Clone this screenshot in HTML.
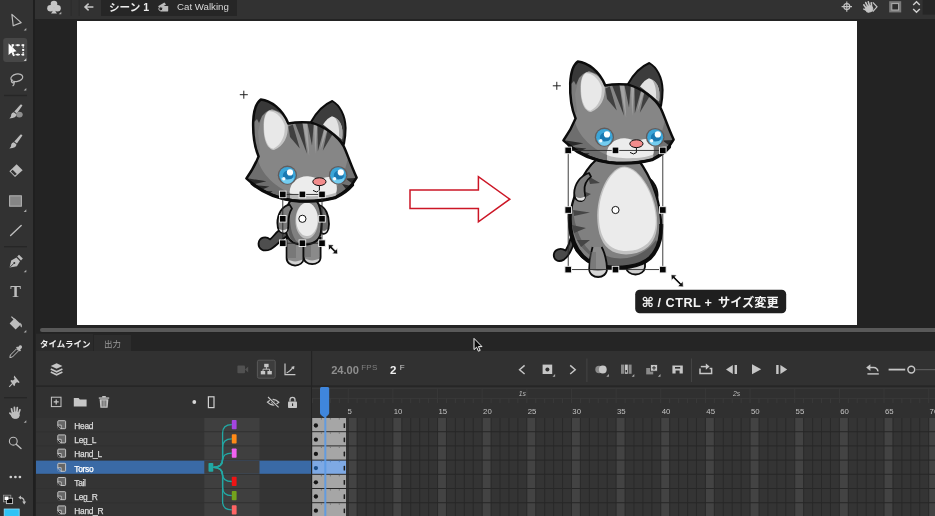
<!DOCTYPE html><html lang="ja"><head><meta charset="utf-8"><title>Cat Walking</title><style>
*{margin:0;padding:0;box-sizing:border-box}
html,body{width:935px;height:516px;overflow:hidden;background:#232323}
body{position:relative;font-family:"Liberation Sans","Noto Sans CJK JP",sans-serif;color:#ddd}
.abs{position:absolute}
#toolbar{left:0;top:0;width:33px;height:516px;background:#323232}
#topbar{left:35px;top:0;width:900px;height:19px;background:#323232}
#crumb{left:101px;top:0;width:136px;height:15.5px;background:#262626}
#stage{left:77px;top:21px;width:780px;height:304px;background:#fff}
#hband{left:40px;top:328px;width:895px;height:3.8px;background:#595959;border-radius:2px 0 0 2px}
#tabs{left:36px;top:333px;width:899px;height:18px;background:#252525}
#tab1{left:36px;top:334px;width:57px;height:17px;background:#2b2b2b}
#tab2{left:94.4px;top:335px;width:36.6px;height:16px;background:#2d2d2d}
#panel{left:36px;top:351px;width:899px;height:165px;background:#313131}
#root{position:absolute;left:0;top:0;width:935px;height:516px;will-change:transform}
.t{position:absolute;white-space:nowrap;line-height:1}
svg{position:absolute;left:0;top:0;overflow:visible}
</style></head><body>
<div id="root">
<div class="abs" id="toolbar"></div>
<div class="abs" id="topbar"></div>
<div class="abs" id="crumb"></div>
<div class="abs" id="stage"></div>
<div class="abs" id="hband"></div>
<div class="abs" id="tabs"></div>
<div class="abs" id="tab1"></div>
<div class="abs" id="tab2"></div>
<div class="abs" id="panel"></div>
<div class="t" style="left:109px;top:1.8px;font-size:10.6px;color:#ececec;font-weight:bold;">シーン 1</div>
<div class="t" style="left:177px;top:2.2px;font-size:9.7px;color:#d8d8d8;font-weight:normal;">Cat Walking</div>
<div class="t" style="left:40px;top:339.5px;font-size:8.5px;color:#f0f0f0;font-weight:bold;">タイムライン</div>
<div class="t" style="left:104px;top:340px;font-size:8.5px;color:#9a9a9a;font-weight:normal;">出力</div>
<div class="t" style="left:331.2px;top:365px;font-size:11.1px;color:#8e8e8e;font-weight:bold;">24.00</div>
<div class="t" style="left:361.2px;top:363.8px;font-size:8px;color:#808080;font-weight:normal;letter-spacing:0.3px">FPS</div>
<div class="t" style="left:390px;top:364.6px;font-size:11.5px;color:#f0f0f0;font-weight:bold;">2</div>
<div class="t" style="left:399.8px;top:363.8px;font-size:8px;color:#d0d0d0;font-weight:normal;">F</div>
<svg width="935" height="516" viewBox="0 0 935 516">
<rect x="36" y="385.5" width="899" height="1.2" fill="#232323"/>
<rect x="311" y="351" width="1.2" height="165" fill="#232323"/>
<rect x="312" y="387" width="623" height="30.5" fill="#303030"/>
<rect x="312" y="388" width="623" height="0.8" fill="#3a3a3a"/>
<rect x="312" y="398" width="623" height="0.8" fill="#3a3a3a"/>
<rect x="312" y="418.0" width="623" height="98.0" fill="#343434"/>
<rect x="348.22" y="418.0" width="8.93" height="98.0" fill="#434343"/>
<rect x="392.87" y="418.0" width="8.93" height="98.0" fill="#434343"/>
<rect x="437.52" y="418.0" width="8.93" height="98.0" fill="#434343"/>
<rect x="482.17" y="418.0" width="8.93" height="98.0" fill="#434343"/>
<rect x="526.82" y="418.0" width="8.93" height="98.0" fill="#434343"/>
<rect x="571.47" y="418.0" width="8.93" height="98.0" fill="#434343"/>
<rect x="616.12" y="418.0" width="8.93" height="98.0" fill="#434343"/>
<rect x="660.77" y="418.0" width="8.93" height="98.0" fill="#434343"/>
<rect x="705.42" y="418.0" width="8.93" height="98.0" fill="#434343"/>
<rect x="750.07" y="418.0" width="8.93" height="98.0" fill="#434343"/>
<rect x="794.72" y="418.0" width="8.93" height="98.0" fill="#434343"/>
<rect x="839.37" y="418.0" width="8.93" height="98.0" fill="#434343"/>
<rect x="884.02" y="418.0" width="8.93" height="98.0" fill="#434343"/>
<rect x="928.67" y="418.0" width="8.93" height="98.0" fill="#434343"/>
<path d="M312.50 418.0V516M321.43 418.0V516M330.36 418.0V516M339.29 418.0V516M348.22 418.0V516M357.15 418.0V516M366.08 418.0V516M375.01 418.0V516M383.94 418.0V516M392.87 418.0V516M401.80 418.0V516M410.73 418.0V516M419.66 418.0V516M428.59 418.0V516M437.52 418.0V516M446.45 418.0V516M455.38 418.0V516M464.31 418.0V516M473.24 418.0V516M482.17 418.0V516M491.10 418.0V516M500.03 418.0V516M508.96 418.0V516M517.89 418.0V516M526.82 418.0V516M535.75 418.0V516M544.68 418.0V516M553.61 418.0V516M562.54 418.0V516M571.47 418.0V516M580.40 418.0V516M589.33 418.0V516M598.26 418.0V516M607.19 418.0V516M616.12 418.0V516M625.05 418.0V516M633.98 418.0V516M642.91 418.0V516M651.84 418.0V516M660.77 418.0V516M669.70 418.0V516M678.63 418.0V516M687.56 418.0V516M696.49 418.0V516M705.42 418.0V516M714.35 418.0V516M723.28 418.0V516M732.21 418.0V516M741.14 418.0V516M750.07 418.0V516M759.00 418.0V516M767.93 418.0V516M776.86 418.0V516M785.79 418.0V516M794.72 418.0V516M803.65 418.0V516M812.58 418.0V516M821.51 418.0V516M830.44 418.0V516M839.37 418.0V516M848.30 418.0V516M857.23 418.0V516M866.16 418.0V516M875.09 418.0V516M884.02 418.0V516M892.95 418.0V516M901.88 418.0V516M910.81 418.0V516M919.74 418.0V516M928.67 418.0V516M937.60 418.0V516" stroke="#282828" stroke-width="0.9" fill="none"/>
<path d="M312.50 398.5V403M321.43 398.5V403M330.36 398.5V403M339.29 398.5V403M348.22 398.5V403M357.15 398.5V403M366.08 398.5V403M375.01 398.5V403M383.94 398.5V403M392.87 398.5V403M401.80 398.5V403M410.73 398.5V403M419.66 398.5V403M428.59 398.5V403M437.52 398.5V403M446.45 398.5V403M455.38 398.5V403M464.31 398.5V403M473.24 398.5V403M482.17 398.5V403M491.10 398.5V403M500.03 398.5V403M508.96 398.5V403M517.89 398.5V403M526.82 398.5V403M535.75 398.5V403M544.68 398.5V403M553.61 398.5V403M562.54 398.5V403M571.47 398.5V403M580.40 398.5V403M589.33 398.5V403M598.26 398.5V403M607.19 398.5V403M616.12 398.5V403M625.05 398.5V403M633.98 398.5V403M642.91 398.5V403M651.84 398.5V403M660.77 398.5V403M669.70 398.5V403M678.63 398.5V403M687.56 398.5V403M696.49 398.5V403M705.42 398.5V403M714.35 398.5V403M723.28 398.5V403M732.21 398.5V403M741.14 398.5V403M750.07 398.5V403M759.00 398.5V403M767.93 398.5V403M776.86 398.5V403M785.79 398.5V403M794.72 398.5V403M803.65 398.5V403M812.58 398.5V403M821.51 398.5V403M830.44 398.5V403M839.37 398.5V403M848.30 398.5V403M857.23 398.5V403M866.16 398.5V403M875.09 398.5V403M884.02 398.5V403M892.95 398.5V403M901.88 398.5V403M910.81 398.5V403M919.74 398.5V403M928.67 398.5V403M937.60 398.5V403" stroke="#3c3c3c" stroke-width="0.8" fill="none"/>
<path d="M348.22 388.5V398.5M392.87 388.5V398.5M437.52 388.5V398.5M482.17 388.5V398.5M526.82 388.5V398.5M571.47 388.5V398.5M616.12 388.5V398.5M660.77 388.5V398.5M705.42 388.5V398.5M750.07 388.5V398.5M794.72 388.5V398.5M839.37 388.5V398.5M884.02 388.5V398.5M928.67 388.5V398.5" stroke="#3a3a3a" stroke-width="0.8" fill="none"/>
<rect x="36" y="418.00" width="275" height="13.20" fill="#343434"/>
<rect x="204.3" y="418.00" width="55.2" height="13.20" fill="#3f3f3f"/>
<rect x="312" y="431.20" width="623" height="1" fill="#272727"/>
<rect x="312.2" y="418.00" width="33.8" height="13.20" fill="#a6a6a6"/>
<path d="M321.4 418.00v1.6M330.4 418.00v1.6M339.3 418.00v1.6" stroke="#6e6e6e" stroke-width="0.8"/>
<circle cx="315.9" cy="425.50" r="2.15" fill="#151515"/>
<rect x="343.6" y="423.20" width="1.5" height="4.8" rx="0.6" fill="#1c1c1c"/>
<rect x="57.8" y="420.70" width="7.8" height="8" rx="0.8" fill="#666" stroke="#cfcfcf" stroke-width="0.9"/>
<path d="M57.4 425.30H61.0V429.10H57.4Z" fill="#343434"/>
<path d="M57.599999999999994 425.10H61.199999999999996V428.90" fill="none" stroke="#cfcfcf" stroke-width="0.8"/>
<path d="M57.599999999999994 425.30L61.0 428.90" stroke="#cfcfcf" stroke-width="0.8"/>
<text x="74.3" y="429.00" font-size="8.4" letter-spacing="-0.3" stroke="#dcdcdc" stroke-width="0.25" fill="#dcdcdc" font-family="Liberation Sans, sans-serif">Head</text>
<rect x="36" y="432.20" width="275" height="13.20" fill="#343434"/>
<rect x="204.3" y="432.20" width="55.2" height="13.20" fill="#3f3f3f"/>
<rect x="312" y="445.40" width="623" height="1" fill="#272727"/>
<rect x="312.2" y="432.20" width="33.8" height="13.20" fill="#a6a6a6"/>
<path d="M321.4 432.20v1.6M330.4 432.20v1.6M339.3 432.20v1.6" stroke="#6e6e6e" stroke-width="0.8"/>
<circle cx="315.9" cy="439.70" r="2.15" fill="#151515"/>
<rect x="343.6" y="437.40" width="1.5" height="4.8" rx="0.6" fill="#1c1c1c"/>
<rect x="57.8" y="434.90" width="7.8" height="8" rx="0.8" fill="#666" stroke="#cfcfcf" stroke-width="0.9"/>
<path d="M57.4 439.50H61.0V443.30H57.4Z" fill="#343434"/>
<path d="M57.599999999999994 439.30H61.199999999999996V443.10" fill="none" stroke="#cfcfcf" stroke-width="0.8"/>
<path d="M57.599999999999994 439.50L61.0 443.10" stroke="#cfcfcf" stroke-width="0.8"/>
<text x="74.3" y="443.20" font-size="8.4" letter-spacing="-0.3" stroke="#dcdcdc" stroke-width="0.25" fill="#dcdcdc" font-family="Liberation Sans, sans-serif">Leg_L</text>
<rect x="36" y="446.40" width="275" height="13.20" fill="#343434"/>
<rect x="204.3" y="446.40" width="55.2" height="13.20" fill="#3f3f3f"/>
<rect x="312" y="459.60" width="623" height="1" fill="#272727"/>
<rect x="312.2" y="446.40" width="33.8" height="13.20" fill="#a6a6a6"/>
<path d="M321.4 446.40v1.6M330.4 446.40v1.6M339.3 446.40v1.6" stroke="#6e6e6e" stroke-width="0.8"/>
<circle cx="315.9" cy="453.90" r="2.15" fill="#151515"/>
<rect x="343.6" y="451.60" width="1.5" height="4.8" rx="0.6" fill="#1c1c1c"/>
<rect x="57.8" y="449.10" width="7.8" height="8" rx="0.8" fill="#666" stroke="#cfcfcf" stroke-width="0.9"/>
<path d="M57.4 453.70H61.0V457.50H57.4Z" fill="#343434"/>
<path d="M57.599999999999994 453.50H61.199999999999996V457.30" fill="none" stroke="#cfcfcf" stroke-width="0.8"/>
<path d="M57.599999999999994 453.70L61.0 457.30" stroke="#cfcfcf" stroke-width="0.8"/>
<text x="74.3" y="457.40" font-size="8.4" letter-spacing="-0.3" stroke="#dcdcdc" stroke-width="0.25" fill="#dcdcdc" font-family="Liberation Sans, sans-serif">Hand_L</text>
<rect x="36" y="460.60" width="275" height="13.20" fill="#3a6aa6"/>
<rect x="204.3" y="460.60" width="55.2" height="13.20" fill="#3f3f3f"/>
<rect x="312" y="473.80" width="623" height="1" fill="#272727"/>
<rect x="312" y="460.60" width="623" height="13.20" fill="#2f2f2f" opacity="0"/>
<rect x="312.2" y="460.60" width="33.8" height="13.20" fill="#7ea9e4"/>
<path d="M321.4 460.60v1.6M330.4 460.60v1.6M339.3 460.60v1.6" stroke="#4f7fc0" stroke-width="0.8"/>
<circle cx="315.9" cy="468.10" r="2.15" fill="#1d4f86"/>
<rect x="343.6" y="465.80" width="1.5" height="4.8" rx="0.6" fill="#1c1c1c"/>
<rect x="57.8" y="463.30" width="7.8" height="8" rx="0.8" fill="#666" stroke="#cfcfcf" stroke-width="0.9"/>
<path d="M57.4 467.90H61.0V471.70H57.4Z" fill="#3a6aa6"/>
<path d="M57.599999999999994 467.70H61.199999999999996V471.50" fill="none" stroke="#cfcfcf" stroke-width="0.8"/>
<path d="M57.599999999999994 467.90L61.0 471.50" stroke="#cfcfcf" stroke-width="0.8"/>
<text x="74.3" y="471.60" font-size="8.4" letter-spacing="-0.3" stroke="#fff" stroke-width="0.25" fill="#fff" font-family="Liberation Sans, sans-serif">Torso</text>
<rect x="36" y="474.80" width="275" height="13.20" fill="#343434"/>
<rect x="204.3" y="474.80" width="55.2" height="13.20" fill="#3f3f3f"/>
<rect x="312" y="488.00" width="623" height="1" fill="#272727"/>
<rect x="312.2" y="474.80" width="33.8" height="13.20" fill="#a6a6a6"/>
<path d="M321.4 474.80v1.6M330.4 474.80v1.6M339.3 474.80v1.6" stroke="#6e6e6e" stroke-width="0.8"/>
<circle cx="315.9" cy="482.30" r="2.15" fill="#151515"/>
<rect x="343.6" y="480.00" width="1.5" height="4.8" rx="0.6" fill="#1c1c1c"/>
<rect x="57.8" y="477.50" width="7.8" height="8" rx="0.8" fill="#666" stroke="#cfcfcf" stroke-width="0.9"/>
<path d="M57.4 482.10H61.0V485.90H57.4Z" fill="#343434"/>
<path d="M57.599999999999994 481.90H61.199999999999996V485.70" fill="none" stroke="#cfcfcf" stroke-width="0.8"/>
<path d="M57.599999999999994 482.10L61.0 485.70" stroke="#cfcfcf" stroke-width="0.8"/>
<text x="74.3" y="485.80" font-size="8.4" letter-spacing="-0.3" stroke="#dcdcdc" stroke-width="0.25" fill="#dcdcdc" font-family="Liberation Sans, sans-serif">Tail</text>
<rect x="36" y="489.00" width="275" height="13.20" fill="#343434"/>
<rect x="204.3" y="489.00" width="55.2" height="13.20" fill="#3f3f3f"/>
<rect x="312" y="502.20" width="623" height="1" fill="#272727"/>
<rect x="312.2" y="489.00" width="33.8" height="13.20" fill="#a6a6a6"/>
<path d="M321.4 489.00v1.6M330.4 489.00v1.6M339.3 489.00v1.6" stroke="#6e6e6e" stroke-width="0.8"/>
<circle cx="315.9" cy="496.50" r="2.15" fill="#151515"/>
<rect x="343.6" y="494.20" width="1.5" height="4.8" rx="0.6" fill="#1c1c1c"/>
<rect x="57.8" y="491.70" width="7.8" height="8" rx="0.8" fill="#666" stroke="#cfcfcf" stroke-width="0.9"/>
<path d="M57.4 496.30H61.0V500.10H57.4Z" fill="#343434"/>
<path d="M57.599999999999994 496.10H61.199999999999996V499.90" fill="none" stroke="#cfcfcf" stroke-width="0.8"/>
<path d="M57.599999999999994 496.30L61.0 499.90" stroke="#cfcfcf" stroke-width="0.8"/>
<text x="74.3" y="500.00" font-size="8.4" letter-spacing="-0.3" stroke="#dcdcdc" stroke-width="0.25" fill="#dcdcdc" font-family="Liberation Sans, sans-serif">Leg_R</text>
<rect x="36" y="503.20" width="275" height="13.20" fill="#343434"/>
<rect x="204.3" y="503.20" width="55.2" height="13.20" fill="#3f3f3f"/>
<rect x="312" y="516.40" width="623" height="1" fill="#272727"/>
<rect x="312.2" y="503.20" width="33.8" height="13.20" fill="#a6a6a6"/>
<path d="M321.4 503.20v1.6M330.4 503.20v1.6M339.3 503.20v1.6" stroke="#6e6e6e" stroke-width="0.8"/>
<circle cx="315.9" cy="510.70" r="2.15" fill="#151515"/>
<rect x="343.6" y="508.40" width="1.5" height="4.8" rx="0.6" fill="#1c1c1c"/>
<rect x="57.8" y="505.90" width="7.8" height="8" rx="0.8" fill="#666" stroke="#cfcfcf" stroke-width="0.9"/>
<path d="M57.4 510.50H61.0V514.30H57.4Z" fill="#343434"/>
<path d="M57.599999999999994 510.30H61.199999999999996V514.10" fill="none" stroke="#cfcfcf" stroke-width="0.8"/>
<path d="M57.599999999999994 510.50L61.0 514.10" stroke="#cfcfcf" stroke-width="0.8"/>
<text x="74.3" y="514.20" font-size="8.4" letter-spacing="-0.3" stroke="#dcdcdc" stroke-width="0.25" fill="#dcdcdc" font-family="Liberation Sans, sans-serif">Hand_R</text>
<path d="M213.4 467.30Q222.6 467.30 222.6 458.80L222.6 433.20Q222.6 424.70 231.8 424.70" stroke="#22a8a4" stroke-width="1.3" fill="none"/>
<rect x="231.8" y="420.00" width="4.8" height="9.3" rx="0.8" fill="#a445e0"/>
<path d="M213.4 467.30Q222.6 467.30 222.6 458.80L222.6 447.40Q222.6 438.90 231.8 438.90" stroke="#22a8a4" stroke-width="1.3" fill="none"/>
<rect x="231.8" y="434.20" width="4.8" height="9.3" rx="0.8" fill="#ff8a17"/>
<path d="M213.4 467.30Q222.6 467.30 222.6 460.20L222.6 460.20Q222.6 453.10 231.8 453.10" stroke="#22a8a4" stroke-width="1.3" fill="none"/>
<rect x="231.8" y="448.40" width="4.8" height="9.3" rx="0.8" fill="#f062f0"/>
<path d="M213.4 467.30Q222.6 467.30 222.6 474.40L222.6 474.40Q222.6 481.50 231.8 481.50" stroke="#22a8a4" stroke-width="1.3" fill="none"/>
<rect x="231.8" y="476.80" width="4.8" height="9.3" rx="0.8" fill="#f01414"/>
<path d="M213.4 467.30Q222.6 467.30 222.6 475.80L222.6 487.20Q222.6 495.70 231.8 495.70" stroke="#22a8a4" stroke-width="1.3" fill="none"/>
<rect x="231.8" y="491.00" width="4.8" height="9.3" rx="0.8" fill="#74a31c"/>
<path d="M213.4 467.30Q222.6 467.30 222.6 475.80L222.6 501.40Q222.6 509.90 231.8 509.90" stroke="#22a8a4" stroke-width="1.3" fill="none"/>
<rect x="231.8" y="505.20" width="4.8" height="9.3" rx="0.8" fill="#ff6464"/>
<rect x="208.5" y="462.90" width="4.8" height="8.9" rx="0.8" fill="#22a8a4"/>
<text x="347.62" y="414" font-size="7.8" fill="#c2c2c2" font-family="Liberation Sans, sans-serif">5</text>
<text x="393.77" y="414" font-size="7.8" fill="#c2c2c2" font-family="Liberation Sans, sans-serif">10</text>
<text x="438.42" y="414" font-size="7.8" fill="#c2c2c2" font-family="Liberation Sans, sans-serif">15</text>
<text x="483.07" y="414" font-size="7.8" fill="#c2c2c2" font-family="Liberation Sans, sans-serif">20</text>
<text x="527.72" y="414" font-size="7.8" fill="#c2c2c2" font-family="Liberation Sans, sans-serif">25</text>
<text x="572.37" y="414" font-size="7.8" fill="#c2c2c2" font-family="Liberation Sans, sans-serif">30</text>
<text x="617.02" y="414" font-size="7.8" fill="#c2c2c2" font-family="Liberation Sans, sans-serif">35</text>
<text x="661.67" y="414" font-size="7.8" fill="#c2c2c2" font-family="Liberation Sans, sans-serif">40</text>
<text x="706.32" y="414" font-size="7.8" fill="#c2c2c2" font-family="Liberation Sans, sans-serif">45</text>
<text x="750.97" y="414" font-size="7.8" fill="#c2c2c2" font-family="Liberation Sans, sans-serif">50</text>
<text x="795.62" y="414" font-size="7.8" fill="#c2c2c2" font-family="Liberation Sans, sans-serif">55</text>
<text x="840.27" y="414" font-size="7.8" fill="#c2c2c2" font-family="Liberation Sans, sans-serif">60</text>
<text x="884.92" y="414" font-size="7.8" fill="#c2c2c2" font-family="Liberation Sans, sans-serif">65</text>
<text x="929.57" y="414" font-size="7.8" fill="#c2c2c2" font-family="Liberation Sans, sans-serif">70</text>
<text x="518.69" y="396" font-size="6.8" font-style="italic" fill="#bdbdbd" font-family="Liberation Sans, sans-serif">1s</text>
<text x="733.01" y="396" font-size="6.8" font-style="italic" fill="#bdbdbd" font-family="Liberation Sans, sans-serif">2s</text>
<rect x="324.3" y="410" width="2" height="106" fill="#5b9ae6" opacity="0.9"/>
<path d="M320 388.5Q320 387 321.4 387H327.8Q329.2 387 329.2 388.5V413Q329.2 414.4 327.6 415.6L325.2 417.2H324L321.6 415.6Q320 414.4 320 413Z" fill="#3f86dc"/>
</svg>
<svg width="935" height="516" viewBox="0 0 935 516">
<path d="M410 190H478.4V176.6L509.8 199.2L478.4 221.8V208.4H410Z" fill="#fff" stroke="#cc1626" stroke-width="1.5" stroke-linejoin="miter"/>
<path d="M288 235.6C282 238 278 245 270.6 249.2C263 252.6 258 248.4 258.6 243C259.4 237.2 266 235.8 270 239.4C274 236.6 277 229.6 285 226.6Z" fill="#4e4e4e" stroke="#0c0c0c" stroke-width="1.8" stroke-linejoin="round"/>
<path d="M319 205C326 207 329 216 329 224C329 231 326 234.6 322.6 233.6C319.6 232.6 319 228 319 224Z" fill="#6a6a6a" stroke="#0c0c0c" stroke-width="1.8"/>
<path d="M321 229.6Q324.6 233 327.6 228.6Q326.4 233.8 322.6 233Z" fill="#ddd"/>
<path d="M286.6 238V258C286.6 268 303.4 268 303.6 258V238Z" fill="#8a8a8a" stroke="#0c0c0c" stroke-width="1.8"/>
<path d="M303.6 238V257C303.8 266.6 320.6 266.6 320.6 257V238Z" fill="#8a8a8a" stroke="#0c0c0c" stroke-width="1.8"/>
<path d="M288 259.6C290 266 301 266 302.6 259.6C298 262 292 262 288 259.6Z" fill="#d4d4d4"/><path d="M305 258.6C307 264.6 318 264.6 319.6 258.6C315 261 309 261 305 258.6Z" fill="#d4d4d4"/>
<path d="M287.6 240H296V258H287.6Z" fill="#6c6c6c" opacity="0.6"/><path d="M304.6 240H311V257H304.6Z" fill="#6c6c6c" opacity="0.6"/>
<path d="M292 199C285 205 284.6 222 286 232C288 242 296 244.6 303.6 244.6C311 244.6 319.6 242 321 232C322.6 221 321.6 205 315 199Z" fill="#808080" stroke="#0c0c0c" stroke-width="2"/>
<path d="M286.6 214C287 226 288 238 294 242L298 243C291 236 289.6 224 290 210Z" fill="#5e5e5e"/>
<ellipse cx="306.8" cy="220.8" rx="11.4" ry="18" fill="#bdbdbd"/>
<ellipse cx="307" cy="219.4" rx="10.8" ry="16.6" fill="#ebebeb"/>
<path d="M289.6 204.6C282 206 277.4 214 277.4 223C277.4 230 280 233.6 284 233.2C288 232.6 288.6 228 288.4 223C288.4 217 289.6 212 292 208.6Z" fill="#7c7c7c" stroke="#0c0c0c" stroke-width="1.8" stroke-linejoin="round"/>
<path d="M279 228.6Q282.6 231.6 287.4 228.6Q287 233 283.6 232.6Q280 232.6 279 228.6Z" fill="#e0e0e0"/>
<g transform="translate(0,0)"><path d="M311 122C316 113 324 104.5 332.3 101C339.5 105 345.3 115 345.6 128C345.6 134 345 139 344 144Z" fill="#3c3c3c" stroke="#0c0c0c" stroke-width="2" stroke-linejoin="round"/><path d="M323 124.5C326 120 329 117.5 332 116.3C337 118 341.5 122 342.3 130C342.5 134 342.4 137 342 139.5Z" fill="#e2e2e2"/><path d="M335 117.6C339 120 341.6 124 342.3 130C342.5 134 342.4 137 342 139.5L339 136C339.6 128 338 122 335 117.6Z" fill="#a8a8a8"/><path d="M258.6 156.4C254.6 147 252.8 134 253.2 121.4C253.7 110 256.6 102.4 260.8 99.4C270.5 100.4 282 108.4 288.3 123.4Q299 121.4 311 122.6C325 126.4 337.6 136 343.6 146C347 153 350 163 356.6 177.6C352 186 345 192.4 335 197.6Q315 202.8 292 200.2C276 198 258.6 190 246.4 178.4Q254 168 258.6 156.4Z" fill="#868686"/><clipPath id="hc0"><path d="M258.6 156.4C254.6 147 252.8 134 253.2 121.4C253.7 110 256.6 102.4 260.8 99.4C270.5 100.4 282 108.4 288.3 123.4Q299 121.4 311 122.6C325 126.4 337.6 136 343.6 146C347 153 350 163 356.6 177.6C352 186 345 192.4 335 197.6Q315 202.8 292 200.2C276 198 258.6 190 246.4 178.4Q254 168 258.6 156.4Z"/></clipPath><g clip-path="url(#hc0)"><path d="M250 160V96H292V124L284 116L270 108L262 116L258 132L260 150Z" fill="#7c7c7c"/><path d="M252 124L257 119L259 123L262 116L266 112L272 109L282 113L290 122L288 100L258 96L250 104Z" fill="#383838"/><path d="M269.4 110.2C276 109.6 284 114 287.8 125C288.6 136 284 146 274 150C266 149 263.2 137 263.6 124C263.8 117 266 111.6 269.4 110.2Z" fill="#c4c4c4"/><path d="M268.8 111.2C274 111 281 115 284.6 125C285.6 135 282 144 273.4 148.8C266.4 147.4 263.8 136 264 124.4C264.2 117.6 266 112.6 268.8 111.2Z" fill="#e8e8e8"/><path d="M244 178L258 160C262 176 280 192 300 196L300 206L250 200Z" fill="#6e6e6e"/><path d="M358 178L348 158C344 176 338 190 326 197L330 206L356 196Z" fill="#727272"/><path d="M288.4 126.6L292.8 124.6L299.8 148.6L290 137Z" fill="#404040"/><path d="M295 123L302.4 122.8L307 153.8Z" fill="#3c3c3c"/><path d="M302.7 122.8L307.2 123L309.2 156Z" fill="#a4a4a4"/><path d="M307.4 123L313.7 123.6L312 145.4Z" fill="#3c3c3c"/><path d="M314 123.8L317.3 124.6L315.2 154Z" fill="#a4a4a4"/><path d="M317.5 124.8L324.3 127.8L317.8 151.4Z" fill="#3c3c3c"/><path d="M324.4 128.2L327.3 130L320.3 150Z" fill="#a4a4a4"/><path d="M327.5 130.2L332.6 134.2L322.8 150.8Z" fill="#404040"/><path d="M249 178.6L266.4 181.2L252.6 184.6Z M254 185L269.4 186.4L258.6 191Z M261 191L272.6 191.2L266.4 196.4Z" fill="#2a2a2a"/><path d="M356 178L345.6 178.4L352.8 184Z M351.6 186L342 184L347.4 191Z" fill="#2a2a2a"/><path d="M289.6 192C290 182 299 175.6 308 176.2C313 176.4 315.6 178.4 319.4 178.4C323.4 178.4 326 176.4 330 177C335.6 178.4 338 186 336.4 192C333 200 322 204 312 204C300 204 291 200 289.6 192Z" fill="#ececec"/><path d="M290 193C300 197.4 326 197.4 336.4 192.6L336 204L290 204Z" fill="#b9b9b9"/></g><path d="M258.6 156.4C254.6 147 252.8 134 253.2 121.4C253.7 110 256.6 102.4 260.8 99.4C270.5 100.4 282 108.4 288.3 123.4Q299 121.4 311 122.6C325 126.4 337.6 136 343.6 146C347 153 350 163 356.6 177.6C352 186 345 192.4 335 197.6Q315 202.8 292 200.2C276 198 258.6 190 246.4 178.4Q254 168 258.6 156.4Z" fill="none" stroke="#0c0c0c" stroke-width="2.5" stroke-linejoin="round"/><path d="M252 183.6C262 192 276 198.2 292 200.4Q315 203 335 197.8C342 194.6 348 190.4 352.6 185" fill="none" stroke="#0c0c0c" stroke-width="3" stroke-linecap="round"/><circle cx="287.4" cy="175.2" r="9.600000000000001" fill="#625c5c"/><circle cx="287.4" cy="175.2" r="8.3" fill="#3ba5d8"/><circle cx="288.0" cy="175.6" r="5.15" fill="#1b79b2"/><path d="M280.76 177.20A6.64 6.64 0 0 0 294.04 177.20A8.3 5.81 0 0 1 280.76 177.20Z" fill="#74cdf0"/><circle cx="290.0" cy="172.39999999999998" r="3.1" fill="#fff"/><circle cx="283.79999999999995" cy="178.79999999999998" r="1.7" fill="#f4fbff"/><circle cx="338.2" cy="175.2" r="9.3" fill="#625c5c"/><circle cx="338.2" cy="175.2" r="8.0" fill="#3ba5d8"/><circle cx="338.8" cy="175.6" r="4.96" fill="#1b79b2"/><path d="M331.80 177.20A6.40 6.40 0 0 0 344.60 177.20A8.0 5.60 0 0 1 331.80 177.20Z" fill="#74cdf0"/><circle cx="340.8" cy="172.39999999999998" r="3.1" fill="#fff"/><circle cx="334.59999999999997" cy="178.79999999999998" r="1.7" fill="#f4fbff"/><ellipse cx="319.4" cy="181.7" rx="6.6" ry="3.9" fill="#f28c8c" stroke="#0c0c0c" stroke-width="1"/><path d="M319.4 185.6V190.6M313 190.4Q316.6 193.4 319.4 190.6" fill="none" stroke="#0c0c0c" stroke-width="1"/></g>
<path d="M574 243C572 249 569 256 564 259.6C558 263 553.4 259.6 553.8 254.6C554.4 249 561 247.4 565.6 250.6C568 247 569.6 243 570.6 238Z" fill="#4a4a4a" stroke="#0c0c0c" stroke-width="1.8" stroke-linejoin="round"/>
<path d="M646.6 177C654 180 658.6 190 657.4 199L650 192Z" fill="#3a3a3a" stroke="#0c0c0c" stroke-width="1.8" stroke-linejoin="round"/>
<path d="M626 258V267C627 277 644 277 645 267V256Z" fill="#cfcfcf" stroke="#0c0c0c" stroke-width="1.8"/>
<path d="M596 160C584 170 571 196 569.6 222C569 246 580 262 602 266.6C620 269.4 640 267 650 258C660 248 662.4 232 660.6 216C658 194 650 176 638.6 160Z" fill="#808080"/>
<clipPath id="tc"><path d="M596 160C584 170 571 196 569.6 222C569 246 580 262 602 266.6C620 269.4 640 267 650 258C660 248 662.4 232 660.6 216C658 194 650 176 638.6 160Z"/></clipPath><g clip-path="url(#tc)">
<path d="M566 200C568 240 580 262 610 268L566 272Z" fill="#4c4c4c"/>
<path d="M572 196C573 236 586 256 612 263C592 262 574 246 571 220Z" fill="#636363"/>
<path d="M588 176L600 183L590 184Z M585.6 192L591 194L586 197Z M573 210L590 212.6L574 216Z M572 225L586 228L574 233Z M577 240L590 240L581 247Z" fill="#454545"/>
<path d="M600 252C612 262 640 262 656 240L664 256L640 272L600 270Z" fill="#5c5c5c"/>
</g>
<path d="M624.6 166.6C640 167 657.6 196 657.2 224C656.8 244 644 254.4 626 254.4C608 254.4 597 242 597.2 215C597.6 190 611 166.6 624.6 166.6Z" fill="#c2c2c2"/>
<path d="M624.6 167.6C639 168 656 196 655.8 222C655.4 241 643 251 626.4 251C609 251 598.6 239 598.8 214C599.2 191 612 167.6 624.6 167.6Z" fill="#ebebeb"/>
<path d="M596 160C584 170 571 196 569.6 222C569 246 580 262 602 266.6C620 269.4 640 267 650 258C660 248 662.4 232 660.6 216C658 194 650 176 638.6 160Z" fill="none" stroke="#0c0c0c" stroke-width="2.2"/>
<path d="M569.8 214C568.6 242 580 262 602 266.6C620 269.4 640 267 650 258C658 250 661.6 238 661.2 224" fill="none" stroke="#0c0c0c" stroke-width="4"/>
<path d="M592.6 247C590.6 254 589.2 262 589.2 268.6C589.2 280 607 280 607 268.6C607 262 604.6 252 601.6 247Z" fill="#8c8c8c"/>
<path d="M592.6 247C590.6 254 589.2 262 589.2 268.6C589.2 280 607 280 607 268.6C607 262 604.6 252 601.6 247" fill="none" stroke="#0c0c0c" stroke-width="1.8"/>
<path d="M590 269.6C591 277.6 605 277.6 606 269.6C601 271.4 595 271.4 590 269.6Z" fill="#d6d6d6"/>
<path d="M590.4 252H596V269H590Z" fill="#6c6c6c" opacity="0.55"/>
<path d="M589 173C580 176 574.6 184 574.2 193C574 199 577.6 201.6 581.6 201C585.4 200.4 585.6 196 584.6 191C584 185 586.6 180 591 176.6Z" fill="#7c7c7c" stroke="#0c0c0c" stroke-width="1.8" stroke-linejoin="round"/>
<path d="M575.6 196.4Q580 199.6 585 196.6Q585 201 581 200.6Q577 200.8 575.6 196.4Z" fill="#e4e4e4"/>
<g transform="translate(317,-38)"><path d="M311 122C316 113 324 104.5 332.3 101C339.5 105 345.3 115 345.6 128C345.6 134 345 139 344 144Z" fill="#3c3c3c" stroke="#0c0c0c" stroke-width="2" stroke-linejoin="round"/><path d="M323 124.5C326 120 329 117.5 332 116.3C337 118 341.5 122 342.3 130C342.5 134 342.4 137 342 139.5Z" fill="#e2e2e2"/><path d="M335 117.6C339 120 341.6 124 342.3 130C342.5 134 342.4 137 342 139.5L339 136C339.6 128 338 122 335 117.6Z" fill="#a8a8a8"/><path d="M258.6 156.4C254.6 147 252.8 134 253.2 121.4C253.7 110 256.6 102.4 260.8 99.4C270.5 100.4 282 108.4 288.3 123.4Q299 121.4 311 122.6C325 126.4 337.6 136 343.6 146C347 153 350 163 356.6 177.6C352 186 345 192.4 335 197.6Q315 202.8 292 200.2C276 198 258.6 190 246.4 178.4Q254 168 258.6 156.4Z" fill="#868686"/><clipPath id="hc317"><path d="M258.6 156.4C254.6 147 252.8 134 253.2 121.4C253.7 110 256.6 102.4 260.8 99.4C270.5 100.4 282 108.4 288.3 123.4Q299 121.4 311 122.6C325 126.4 337.6 136 343.6 146C347 153 350 163 356.6 177.6C352 186 345 192.4 335 197.6Q315 202.8 292 200.2C276 198 258.6 190 246.4 178.4Q254 168 258.6 156.4Z"/></clipPath><g clip-path="url(#hc317)"><path d="M250 160V96H292V124L284 116L270 108L262 116L258 132L260 150Z" fill="#7c7c7c"/><path d="M252 124L257 119L259 123L262 116L266 112L272 109L282 113L290 122L288 100L258 96L250 104Z" fill="#383838"/><path d="M269.4 110.2C276 109.6 284 114 287.8 125C288.6 136 284 146 274 150C266 149 263.2 137 263.6 124C263.8 117 266 111.6 269.4 110.2Z" fill="#c4c4c4"/><path d="M268.8 111.2C274 111 281 115 284.6 125C285.6 135 282 144 273.4 148.8C266.4 147.4 263.8 136 264 124.4C264.2 117.6 266 112.6 268.8 111.2Z" fill="#e8e8e8"/><path d="M244 178L258 160C262 176 280 192 300 196L300 206L250 200Z" fill="#6e6e6e"/><path d="M358 178L348 158C344 176 338 190 326 197L330 206L356 196Z" fill="#727272"/><path d="M288.4 126.6L292.8 124.6L299.8 148.6L290 137Z" fill="#404040"/><path d="M295 123L302.4 122.8L307 153.8Z" fill="#3c3c3c"/><path d="M302.7 122.8L307.2 123L309.2 156Z" fill="#a4a4a4"/><path d="M307.4 123L313.7 123.6L312 145.4Z" fill="#3c3c3c"/><path d="M314 123.8L317.3 124.6L315.2 154Z" fill="#a4a4a4"/><path d="M317.5 124.8L324.3 127.8L317.8 151.4Z" fill="#3c3c3c"/><path d="M324.4 128.2L327.3 130L320.3 150Z" fill="#a4a4a4"/><path d="M327.5 130.2L332.6 134.2L322.8 150.8Z" fill="#404040"/><path d="M249 178.6L266.4 181.2L252.6 184.6Z M254 185L269.4 186.4L258.6 191Z M261 191L272.6 191.2L266.4 196.4Z" fill="#2a2a2a"/><path d="M356 178L345.6 178.4L352.8 184Z M351.6 186L342 184L347.4 191Z" fill="#2a2a2a"/><path d="M289.6 192C290 182 299 175.6 308 176.2C313 176.4 315.6 178.4 319.4 178.4C323.4 178.4 326 176.4 330 177C335.6 178.4 338 186 336.4 192C333 200 322 204 312 204C300 204 291 200 289.6 192Z" fill="#ececec"/><path d="M290 193C300 197.4 326 197.4 336.4 192.6L336 204L290 204Z" fill="#b9b9b9"/></g><path d="M258.6 156.4C254.6 147 252.8 134 253.2 121.4C253.7 110 256.6 102.4 260.8 99.4C270.5 100.4 282 108.4 288.3 123.4Q299 121.4 311 122.6C325 126.4 337.6 136 343.6 146C347 153 350 163 356.6 177.6C352 186 345 192.4 335 197.6Q315 202.8 292 200.2C276 198 258.6 190 246.4 178.4Q254 168 258.6 156.4Z" fill="none" stroke="#0c0c0c" stroke-width="2.5" stroke-linejoin="round"/><path d="M252 183.6C262 192 276 198.2 292 200.4Q315 203 335 197.8C342 194.6 348 190.4 352.6 185" fill="none" stroke="#0c0c0c" stroke-width="3" stroke-linecap="round"/><circle cx="287.4" cy="175.2" r="9.600000000000001" fill="#625c5c"/><circle cx="287.4" cy="175.2" r="8.3" fill="#3ba5d8"/><circle cx="288.0" cy="175.6" r="5.15" fill="#1b79b2"/><path d="M280.76 177.20A6.64 6.64 0 0 0 294.04 177.20A8.3 5.81 0 0 1 280.76 177.20Z" fill="#74cdf0"/><circle cx="290.0" cy="172.39999999999998" r="3.1" fill="#fff"/><circle cx="283.79999999999995" cy="178.79999999999998" r="1.7" fill="#f4fbff"/><circle cx="338.2" cy="175.2" r="9.3" fill="#625c5c"/><circle cx="338.2" cy="175.2" r="8.0" fill="#3ba5d8"/><circle cx="338.8" cy="175.6" r="4.96" fill="#1b79b2"/><path d="M331.80 177.20A6.40 6.40 0 0 0 344.60 177.20A8.0 5.60 0 0 1 331.80 177.20Z" fill="#74cdf0"/><circle cx="340.8" cy="172.39999999999998" r="3.1" fill="#fff"/><circle cx="334.59999999999997" cy="178.79999999999998" r="1.7" fill="#f4fbff"/><ellipse cx="319.4" cy="181.7" rx="6.6" ry="3.9" fill="#f28c8c" stroke="#0c0c0c" stroke-width="1"/><path d="M319.4 185.6V190.6M313 190.4Q316.6 193.4 319.4 190.6" fill="none" stroke="#0c0c0c" stroke-width="1"/></g>
<rect x="282.8" y="194.4" width="39.19999999999999" height="48.79999999999998" fill="none" stroke="#2a2a2a" stroke-width="0.9"/>
<circle cx="302.4" cy="218.8" r="3.6" fill="#fff" stroke="#111" stroke-width="1"/>
<rect x="279.50" y="191.10" width="6.6" height="6.6" fill="#050505" stroke="#f2f2f2" stroke-width="0.9"/>
<rect x="299.10" y="191.10" width="6.6" height="6.6" fill="#050505" stroke="#f2f2f2" stroke-width="0.9"/>
<rect x="318.70" y="191.10" width="6.6" height="6.6" fill="#050505" stroke="#f2f2f2" stroke-width="0.9"/>
<rect x="279.50" y="215.50" width="6.6" height="6.6" fill="#050505" stroke="#f2f2f2" stroke-width="0.9"/>
<rect x="318.70" y="215.50" width="6.6" height="6.6" fill="#050505" stroke="#f2f2f2" stroke-width="0.9"/>
<rect x="279.50" y="239.90" width="6.6" height="6.6" fill="#050505" stroke="#f2f2f2" stroke-width="0.9"/>
<rect x="299.10" y="239.90" width="6.6" height="6.6" fill="#050505" stroke="#f2f2f2" stroke-width="0.9"/>
<rect x="318.70" y="239.90" width="6.6" height="6.6" fill="#050505" stroke="#f2f2f2" stroke-width="0.9"/>
<rect x="568.2" y="150.4" width="94.59999999999991" height="119.20000000000002" fill="none" stroke="#2a2a2a" stroke-width="0.9"/>
<circle cx="615.5" cy="210.0" r="3.6" fill="#fff" stroke="#111" stroke-width="1"/>
<rect x="564.90" y="147.10" width="6.6" height="6.6" fill="#050505" stroke="#f2f2f2" stroke-width="0.9"/>
<rect x="612.20" y="147.10" width="6.6" height="6.6" fill="#050505" stroke="#f2f2f2" stroke-width="0.9"/>
<rect x="659.50" y="147.10" width="6.6" height="6.6" fill="#050505" stroke="#f2f2f2" stroke-width="0.9"/>
<rect x="564.90" y="206.70" width="6.6" height="6.6" fill="#050505" stroke="#f2f2f2" stroke-width="0.9"/>
<rect x="659.50" y="206.70" width="6.6" height="6.6" fill="#050505" stroke="#f2f2f2" stroke-width="0.9"/>
<rect x="564.90" y="266.30" width="6.6" height="6.6" fill="#050505" stroke="#f2f2f2" stroke-width="0.9"/>
<rect x="612.20" y="266.30" width="6.6" height="6.6" fill="#050505" stroke="#f2f2f2" stroke-width="0.9"/>
<rect x="659.50" y="266.30" width="6.6" height="6.6" fill="#050505" stroke="#f2f2f2" stroke-width="0.9"/>
<path d="M239.8 94.7H247.8M243.8 90.7V98.7" stroke="#222" stroke-width="1"/>
<path d="M552.8 85.8H560.8M556.8 81.8V89.8" stroke="#222" stroke-width="1"/>
<g transform="translate(333,249.3) rotate(45)"><path d="M-6.7 0L-2.4000000000000004 -3.8V-1.1H2.4000000000000004V-3.8L6.7 0L2.4000000000000004 3.8V1.1H-2.4000000000000004V3.8Z" fill="#111" stroke="#fff" stroke-width="0.7"/></g>
<g transform="translate(677.2,280.8) rotate(45)"><path d="M-8.7 0L-4.3999999999999995 -3.8V-1.1H4.3999999999999995V-3.8L8.7 0L4.3999999999999995 3.8V1.1H-4.3999999999999995V3.8Z" fill="#111" stroke="#fff" stroke-width="0.7"/></g>
<rect x="635.2" y="289.8" width="151" height="23.4" rx="4.5" fill="#1f1f1f"/>
<text y="306.8" font-size="12.6" font-weight="bold" fill="#f4f4f4" font-family="Liberation Sans, DejaVu Sans, Noto Sans CJK JP, sans-serif"><tspan x="641.4" font-size="13.4">⌘</tspan><tspan x="657.6">/</tspan><tspan x="665.6" letter-spacing="0.5">CTRL</tspan><tspan x="704.6">+</tspan><tspan x="718" font-size="12.2">サイズ変更</tspan></text>
<path d="M474 338.4V349.6L476.6 347.2L478.4 351.2L480.2 350.4L478.4 346.6H482Z" fill="#0a0a0a" stroke="#f2f2f2" stroke-width="1" stroke-linejoin="round"/>
</svg>
<svg width="935" height="516" viewBox="0 0 935 516">
<rect x="33" y="0" width="2" height="516" fill="#1f1f1f"/>
<path d="M11.9 14.4L21.2 22.6L13.2 25.8Z" fill="none" stroke="#bdbdbd" stroke-width="1.2" stroke-linejoin="round"/>
<path d="M26.3 27.9V30.5H23.7Z" fill="#aaa"/>
<rect x="3.2" y="38" width="24" height="24" rx="3" fill="#474747"/>
<path d="M8.6 43.6V55L11.6 52.6L13.2 56.2L14.9 55.4L13.3 51.9L16.6 51.3Z" fill="#fff"/>
<rect x="12.6" y="45.2" width="10.6" height="9.4" fill="none" stroke="#eee" stroke-width="1.2" stroke-dasharray="1.6 1.3"/>
<g fill="#fff"><rect x="11.6" y="44.2" width="2" height="2"/><rect x="22.2" y="44.2" width="2" height="2"/><rect x="22.2" y="53.6" width="2" height="2"/><rect x="16.8" y="44.2" width="2" height="2"/><rect x="16.8" y="53.6" width="2" height="2"/><rect x="22.2" y="48.9" width="2" height="2"/></g>
<path d="M26.3 58.300000000000004V60.9H23.7Z" fill="#ccc"/>
<ellipse cx="16.8" cy="77.8" rx="6" ry="3.7" transform="rotate(-12 16.8 77.8)" fill="none" stroke="#bdbdbd" stroke-width="1.2"/>
<path d="M12.4 79.6A1.7 1.7 0 1 0 14.4 82.2Q14.4 84.5 12.6 86.2" fill="none" stroke="#bdbdbd" stroke-width="1.1"/>
<path d="M26.3 88.0V90.6H23.7Z" fill="#aaa"/>
<rect x="4" y="94.8" width="23" height="1.4" fill="#262626"/>
<rect x="4" y="246" width="23" height="1.4" fill="#262626"/>
<rect x="4" y="397" width="23" height="1.4" fill="#262626"/>
<path d="M20.6 104.4Q22 104.2 22.4 105.6L16.9 113.4L14.3 111.5Z" fill="#bdbdbd"/>
<path d="M13.8 112.2L16.4 114.2Q16.6 118 9.4 118.4Q11.6 116.6 11.2 114.6Q11.6 112.4 13.8 112.2Z" fill="#bdbdbd"/>
<ellipse cx="19.4" cy="114.6" rx="3.3" ry="2.9" fill="#8f8f8f"/>
<path d="M20.6 134.4Q22 134.2 22.4 135.6L16.9 143.4L14.3 141.5Z" fill="#bdbdbd"/>
<path d="M13.8 142.2L16.4 144.2Q16.6 148 9.4 148.4Q11.6 146.6 11.2 144.6Q11.6 142.4 13.8 142.2Z" fill="#bdbdbd"/>
<path d="M16.6 164.2L22.6 170.2L15 177L9.4 171.2Z" fill="#bdbdbd"/>
<path d="M10.8 171.4L14.9 175.6L16.8 173.9L12.7 169.7Z" fill="#333"/>
<rect x="9.6" y="195.8" width="11.8" height="10.4" fill="#858585" stroke="#b4b4b4" stroke-width="1"/>
<path d="M26.3 209.29999999999998V211.9H23.7Z" fill="#aaa"/>
<path d="M10.6 235.6L21.2 225.4" stroke="#bdbdbd" stroke-width="1.4" stroke-linecap="round"/>
<path d="M9.6 267.6L11.2 260.6L16.4 257.6L20 261.2L17 266.2Z" fill="#bdbdbd"/>
<path d="M17.2 256.6L19 254.8L22.8 258.6L21 260.4Z" fill="#bdbdbd"/>
<path d="M9.9 267.3L13.8 263.4" stroke="#333" stroke-width="0.9"/><circle cx="14.3" cy="262.9" r="1" fill="#333"/>
<path d="M26.3 269.7V272.3H23.7Z" fill="#aaa"/>
<text x="15.7" y="297.2" font-size="16" font-weight="bold" text-anchor="middle" fill="#bdbdbd" font-family="Liberation Serif, serif">T</text>
<path d="M14.6 318.2L21 324.2L15.6 329.4L9.6 323.4Z" fill="#bdbdbd"/>
<path d="M11.4 316.6L15.8 320.8" stroke="#bdbdbd" stroke-width="1.2" fill="none"/>
<path d="M20.4 322.6Q22.6 325 21.8 327.6Q20 327 20.2 324.6Z" fill="#bdbdbd"/>
<path d="M26.3 330.0V332.6H23.7Z" fill="#aaa"/>
<path d="M9.8 357.6L10.4 355L16.6 348.8L18.6 350.8L12.4 357Z" fill="none" stroke="#bdbdbd" stroke-width="1"/>
<path d="M16 347.6L17.2 346.4L18 347.2L19.4 345.6Q21 344.8 21.8 346Q22.4 347.2 21.6 348.2L20.2 349.6L21 350.4L19.8 351.6Z" fill="#bdbdbd"/>
<path d="M13.6 375.6L20 381.6L18.6 382.6L17.4 381.8L15.6 383.6L15.8 385.4L14.8 386L10.6 381.6L11.2 380.6L13 380.8L14.6 379L13.4 377.6Z" fill="#bdbdbd" transform="rotate(8 15 380)"/>
<path d="M12.6 383.4L9.2 386.8" stroke="#bdbdbd" stroke-width="1.1"/>
<g fill="#bdbdbd" stroke="#bdbdbd"><ellipse cx="15.4" cy="415.2" rx="3.9" ry="3.3"/><path d="M12.5 413.4L11.5 408.8M14.7 412.6L14.4 407.3M16.8 412.6L17.3 407.7M18.6 413.8L19.9 409.8M12.6 416L9.9 413.2" fill="none" stroke-width="1.75" stroke-linecap="round"/></g>
<path d="M26.3 420.2V422.8H23.7Z" fill="#aaa"/>
<circle cx="13.3" cy="441.2" r="3.9" fill="none" stroke="#bdbdbd" stroke-width="1.1"/><path d="M16.2 444.2L21 448.6" stroke="#bdbdbd" stroke-width="1.4" stroke-linecap="round"/>
<circle cx="10.8" cy="477" r="1.35" fill="#d0d0d0"/>
<circle cx="15.4" cy="477" r="1.35" fill="#d0d0d0"/>
<circle cx="19.9" cy="477" r="1.35" fill="#d0d0d0"/>
<rect x="3.4" y="495.2" width="7.4" height="6.6" fill="none" stroke="#9a9a9a" stroke-width="0.8"/><rect x="6.4" y="498.2" width="6.2" height="5.4" fill="#0c0c0c" stroke="#c8c8c8" stroke-width="0.9"/><rect x="4.6" y="496.6" width="3.8" height="3.4" fill="#fff"/>
<path d="M19.2 497.6Q24.2 497.2 24.2 502.2" fill="none" stroke="#bdbdbd" stroke-width="1.3"/><path d="M18.4 497.6L21 495.6V499.6Z" fill="#bdbdbd"/><path d="M24.2 504.4L22.2 501.6H26.2Z" fill="#bdbdbd"/>
<rect x="4.2" y="509" width="15" height="8" fill="#2fc3f5" stroke="#8fdcf8" stroke-width="0.8"/>
<rect x="922.6" y="0" width="13" height="14.6" fill="#262626"/>
<rect x="70.6" y="0" width="1" height="16" fill="#2b2b2b"/><rect x="78.6" y="0" width="1" height="16" fill="#2b2b2b"/>
<g fill="#c6c6c6"><circle cx="54" cy="4.1" r="3.3"/><circle cx="50.5" cy="8.3" r="3.3"/><circle cx="57.5" cy="8.3" r="3.3"/><path d="M53.2 6H54.8Q54.8 11.6 57 13.4H51Q53.2 11.6 53.2 6Z"/></g>
<path d="M61.3 11.7V14.3H58.7Z" fill="#aaa"/>
<path d="M85 7H93.4M88.6 3.6L85 7L88.6 10.4" fill="none" stroke="#c8c8c8" stroke-width="1.5"/>
<path d="M158 6.2L164.4 2.4L166 4.6L160.2 8.2Z" fill="#bbb"/><rect x="160.4" y="6" width="7.8" height="5.4" rx="0.6" fill="#bbb"/><circle cx="160.8" cy="8.8" r="2" fill="#262626" stroke="#bbb" stroke-width="1"/>
<circle cx="846.8" cy="6.6" r="3" fill="none" stroke="#c4c4c4" stroke-width="1.1"/><path d="M846.8 1.4V11.8M841.6 6.6H852" stroke="#c4c4c4" stroke-width="1.1"/>
<g transform="translate(868.2,7.2) rotate(-22) scale(0.92) translate(-15,-413)" fill="#c4c4c4" stroke="#c4c4c4"><ellipse cx="15.4" cy="415.2" rx="3.9" ry="3.3"/><path d="M12.5 413.4L11.5 408.8M14.7 412.6L14.4 407.3M16.8 412.6L17.3 407.7M18.6 413.8L19.9 409.8M12.6 416L9.9 413.2" fill="none" stroke-width="1.75" stroke-linecap="round"/></g>
<path d="M872.8 2.4L877 6.8L872.8 11.6" fill="none" stroke="#c4c4c4" stroke-width="1.2"/>
<rect x="889.2" y="1.2" width="12" height="11.2" fill="#7a7a7a"/><rect x="891.8" y="3.6" width="6.8" height="6.4" fill="#2c2c2c" stroke="#b0b0b0" stroke-width="1"/>
<path d="M913.2 5L916.5 1.8L919.8 5M913.2 9L916.5 12.2L919.8 9" fill="none" stroke="#d0d0d0" stroke-width="1.4"/>
<path d="M56.6 363.2L62.4 366L56.6 368.8L50.8 366Z" fill="#c6c6c6"/><path d="M50.8 369L56.6 371.8L62.4 369M50.8 372L56.6 374.8L62.4 372" fill="none" stroke="#c6c6c6" stroke-width="1.5"/>
<rect x="51.4" y="397.2" width="9.6" height="9.4" fill="none" stroke="#c6c6c6" stroke-width="1"/><path d="M56.2 399.4V404.4M53.7 401.9H58.7" stroke="#c6c6c6" stroke-width="1.2"/>
<path d="M73.8 398H78.6L79.8 399.4H86.6V406.6H73.8Z" fill="#c6c6c6"/>
<path d="M99.6 399.2H108.4L107.6 407.8H100.4Z" fill="#c6c6c6"/><rect x="98.8" y="397.4" width="10.4" height="1.3" fill="#c6c6c6"/><rect x="102.2" y="396" width="3.6" height="1.6" fill="#c6c6c6"/><path d="M102.2 400.4V406.6M104 400.4V406.6M105.8 400.4V406.6" stroke="#2f2f2f" stroke-width="0.7"/>
<rect x="237.4" y="365.6" width="7.6" height="7.6" rx="1" fill="#515151"/><path d="M245 369.4L248.2 366.4V372.6Z" fill="#515151"/>
<rect x="257.4" y="360.2" width="17.8" height="18" rx="1.5" fill="#3d3d3d" stroke="#5c5c5c" stroke-width="0.9"/>
<rect x="264.2" y="363.8" width="4.4" height="3.4" fill="#c6c6c6"/><rect x="260.8" y="371" width="4.4" height="3.4" fill="#c6c6c6"/><rect x="267.4" y="371" width="4.4" height="3.4" fill="#c6c6c6"/><path d="M266.4 367V369.2M263 371V369.2H269.6V371" fill="none" stroke="#c6c6c6" stroke-width="0.9"/>
<path d="M285 363.6V374.6H295.4" fill="none" stroke="#c6c6c6" stroke-width="1.2"/><path d="M286.6 373Q289.6 371.6 293 367.6" fill="none" stroke="#c6c6c6" stroke-width="1.2"/><path d="M294.4 366L294 369.4L291 367Z" fill="#c6c6c6"/>
<circle cx="194.3" cy="402" r="1.9" fill="#d8d8d8"/><rect x="208.4" y="396.8" width="5.6" height="10.8" fill="none" stroke="#d0d0d0" stroke-width="1.2"/>
<path d="M267.4 402.2Q273 396.6 278.8 402.2Q273 407.8 267.4 402.2Z" fill="none" stroke="#c6c6c6" stroke-width="1.2"/><circle cx="273.1" cy="402.2" r="1.8" fill="#c6c6c6"/><path d="M268.4 396.8L278.4 407.6" stroke="#2f2f2f" stroke-width="2.6"/><path d="M268 397L278.6 407.4" stroke="#c6c6c6" stroke-width="1.1"/>
<rect x="288" y="401.4" width="9" height="6.6" rx="0.8" fill="#c6c6c6"/><path d="M290 401.6V399.8A2.5 2.5 0 0 1 295 399.8V401.6" fill="none" stroke="#c6c6c6" stroke-width="1.3"/><rect x="292" y="403.4" width="1.1" height="2.6" fill="#2f2f2f"/>
<path d="M524.6 365.4L519.6 369.7L524.6 374" fill="none" stroke="#c6c6c6" stroke-width="1.5"/>
<rect x="542.6" y="364.6" width="9.6" height="9.4" fill="#c6c6c6"/><circle cx="547.4" cy="369.6" r="2" fill="#2f2f2f"/>
<path d="M555.0999999999999 374.09999999999997V376.7H552.5Z" fill="#aaa"/>
<path d="M570.2 365.4L575.2 369.7L570.2 374" fill="none" stroke="#c6c6c6" stroke-width="1.5"/>
<rect x="586.4" y="358.5" width="1" height="23.5" fill="#444"/><rect x="691" y="358.5" width="1" height="23.5" fill="#444"/>
<circle cx="599" cy="369.5" r="3.7" fill="#8a8a8a"/><circle cx="602.8" cy="369.5" r="3.9" fill="#c6c6c6"/>
<path d="M608.9 374.09999999999997V376.7H606.3000000000001Z" fill="#aaa"/>
<rect x="621" y="364.6" width="3" height="9.2" fill="#8a8a8a"/><rect x="624.8" y="364.6" width="3" height="9.2" fill="#c6c6c6"/><rect x="628.6" y="364.6" width="3" height="9.2" fill="#8a8a8a"/><rect x="625.6" y="370" width="1.4" height="2.4" fill="#2f2f2f"/>
<path d="M634.3 374.09999999999997V376.7H631.7Z" fill="#aaa"/>
<rect x="646.2" y="368" width="7" height="6.4" fill="#8a8a8a"/><rect x="650.4" y="364.6" width="7.2" height="6.6" fill="#c6c6c6" stroke="#2f2f2f" stroke-width="0.8"/><path d="M654 366V369.8M652.1 367.9H655.9" stroke="#2f2f2f" stroke-width="1"/>
<path d="M660.5 374.09999999999997V376.7H657.9000000000001Z" fill="#aaa"/>
<path d="M672.4 365.4H682.8V373.4H679.6V370.4H675.6V373.4H672.4Z" fill="#c6c6c6"/><rect x="675" y="367" width="5.2" height="1.6" fill="#2f2f2f"/>
<path d="M700 368.4V373.6H711.6V368.4H709.6" fill="none" stroke="#c6c6c6" stroke-width="1.5"/><path d="M700.8 366.6H706.4" stroke="#c6c6c6" stroke-width="1.5"/><path d="M705.8 363.4L709.6 366.6L705.8 369.8Z" fill="#c6c6c6"/>
<path d="M732.8 365L726 369.5L732.8 374Z" fill="#c6c6c6"/><rect x="734.6" y="365" width="2.4" height="9" fill="#c6c6c6"/>
<path d="M752 364.2L761.2 369.2L752 374.2Z" fill="#c6c6c6"/>
<rect x="776.2" y="365" width="2.4" height="9" fill="#c6c6c6"/><path d="M780.4 365L787.2 369.5L780.4 374Z" fill="#c6c6c6"/>
<path d="M869 367.6H873.6A4.2 3.4 0 0 1 877.8 371.4" fill="none" stroke="#c6c6c6" stroke-width="1.5"/><path d="M866.2 367.6L870.4 364.2V371Z" fill="#c6c6c6"/><rect x="867.4" y="373.2" width="11.4" height="1.4" fill="#c6c6c6"/>
<rect x="888.6" y="368.7" width="16.6" height="1.8" fill="#c6c6c6"/><circle cx="911.3" cy="369.6" r="3.4" fill="#2f2f2f" stroke="#c6c6c6" stroke-width="1.5"/><rect x="915.6" y="369" width="20" height="1.2" fill="#5a5a5a"/>
</svg>
</div></body></html>
